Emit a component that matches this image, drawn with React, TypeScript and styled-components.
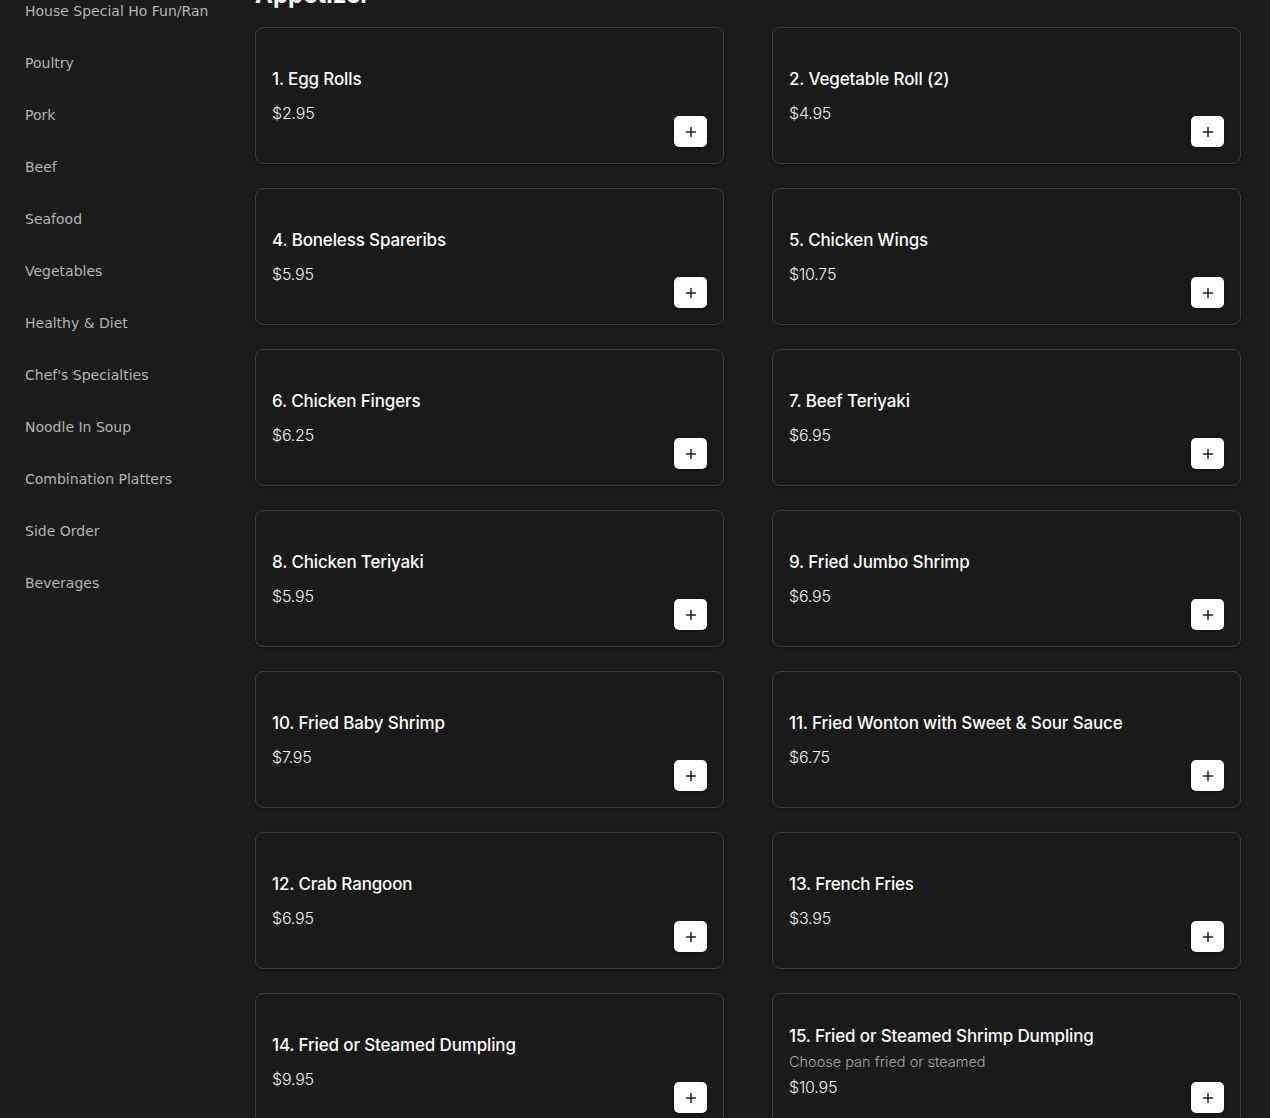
import React from "react";
import styled, { createGlobalStyle } from "styled-components";

const Global = createGlobalStyle`
  html, body { margin: 0; padding: 0; background: #1b1b1b; overflow: hidden; }
  body { font-family: "Inter", "Open Sans", sans-serif; color: #fff; }
  * { box-sizing: border-box; }
`;

const Page = styled.div`
  display: flex;
  gap: 24px;
  margin-top: -21px;
  padding-right: 29px;
`;

const Sidebar = styled.nav`
  width: 231px;
  flex-shrink: 0;
  padding: 6px 0 0 25px;
  display: flex;
  flex-direction: column;
`;

const NavItem = styled.a`
  font-family: "DejaVu Sans", sans-serif;
  font-size: 14px;
  line-height: 20px;
  padding: 16px 0;
  color: #b3b3b3;
  white-space: nowrap;
  overflow: hidden;
  text-decoration: none;
`;

const Main = styled.main`
  flex: 1;
  min-width: 0;
`;

const Heading = styled.h2`
  margin: 0 0 16px;
  font-size: 24px;
  line-height: 32px;
  font-weight: 700;
  color: #fff;
`;

const Grid = styled.div`
  display: grid;
  grid-template-columns: 1fr 1fr;
  column-gap: 48px;
  row-gap: 24px;
`;

const Card = styled.div`
  display: flex;
  align-items: center;
  justify-content: space-between;
  gap: 16px;
  height: 137px;
  padding: 16px;
  border: 1px solid #3c3c3c;
  border-radius: 8px;
  background: #1a1a1a;
  box-shadow: 0 1px 3px rgba(0, 0, 0, 0.35);
`;

const Info = styled.div`
  display: flex;
  flex-direction: column;
`;

const Title = styled.div<{ $hasDesc?: boolean }>`
  font-size: 17px;
  line-height: 24px;
  font-weight: 500;
  letter-spacing: -0.15px;
  color: #fff;
  margin-bottom: ${(p) => (p.$hasDesc ? "4px" : "10px")};
`;

const Desc = styled.div`
  font-size: 14.5px;
  line-height: 20px;
  color: #a6a6a6;
  font-weight: 300;
  margin-bottom: 3px;
`;

const Price = styled.div`
  font-size: 16px;
  line-height: 24px;
  font-weight: 300;
  letter-spacing: -0.2px;
  color: #f2f2f2;
`;

const AddButton = styled.button`
  align-self: flex-end;
  flex-shrink: 0;
  width: 33px;
  height: 31px;
  border: none;
  border-radius: 5px;
  background: #fff;
  display: flex;
  align-items: center;
  justify-content: center;
  padding: 0;
  cursor: pointer;
  box-shadow: 0 1px 3px rgba(0, 0, 0, 0.4);
`;

const categories = [
  "House Special Ho Fun/Ran",
  "Poultry",
  "Pork",
  "Beef",
  "Seafood",
  "Vegetables",
  "Healthy & Diet",
  "Chef's Specialties",
  "Noodle In Soup",
  "Combination Platters",
  "Side Order",
  "Beverages",
];

type Item = { name: string; price: string; desc?: string };

const items: Item[] = [
  { name: "1. Egg Rolls", price: "$2.95" },
  { name: "2. Vegetable Roll (2)", price: "$4.95" },
  { name: "4. Boneless Spareribs", price: "$5.95" },
  { name: "5. Chicken Wings", price: "$10.75" },
  { name: "6. Chicken Fingers", price: "$6.25" },
  { name: "7. Beef Teriyaki", price: "$6.95" },
  { name: "8. Chicken Teriyaki", price: "$5.95" },
  { name: "9. Fried Jumbo Shrimp", price: "$6.95" },
  { name: "10. Fried Baby Shrimp", price: "$7.95" },
  { name: "11. Fried Wonton with Sweet & Sour Sauce", price: "$6.75" },
  { name: "12. Crab Rangoon", price: "$6.95" },
  { name: "13. French Fries", price: "$3.95" },
  { name: "14. Fried or Steamed Dumpling", price: "$9.95" },
  {
    name: "15. Fried or Steamed Shrimp Dumpling",
    price: "$10.95",
    desc: "Choose pan fried or steamed",
  },
];

const PlusIcon = () => (
  <svg width="12" height="12" viewBox="0 0 12 12" fill="none">
    <path d="M6 1.5v9M1.5 6h9" stroke="#1f1f1f" strokeWidth="1.5" strokeLinecap="round" />
  </svg>
);

export default function App() {
  return (
    <>
      <Global />
      <Page>
        <Sidebar>
          {categories.map((c) => (
            <NavItem key={c} href="#">
              {c}
            </NavItem>
          ))}
        </Sidebar>
        <Main>
          <Heading>Appetizer</Heading>
          <Grid>
            {items.map((it) => (
              <Card key={it.name}>
                <Info>
                  <Title $hasDesc={!!it.desc}>{it.name}</Title>
                  {it.desc && <Desc>{it.desc}</Desc>}
                  <Price>{it.price}</Price>
                </Info>
                <AddButton aria-label="Add">
                  <PlusIcon />
                </AddButton>
              </Card>
            ))}
          </Grid>
        </Main>
      </Page>
    </>
  );
}
